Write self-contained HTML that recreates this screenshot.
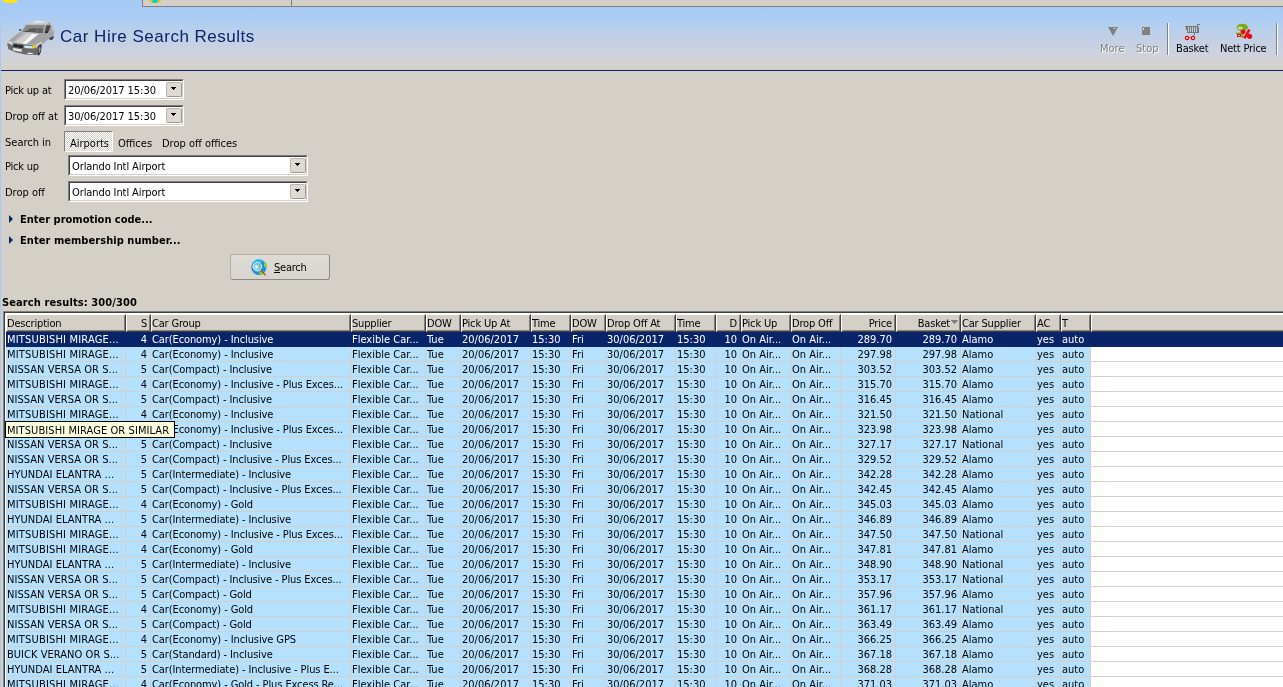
<!DOCTYPE html>
<html lang="en"><head><meta charset="utf-8"><title>Car Hire Search Results</title>
<style>
html,body{margin:0;padding:0}
body{width:1283px;height:687px;overflow:hidden;position:relative;background:#D4D0C8;font-family:"DejaVu Sans Condensed","Liberation Sans",sans-serif;font-size:11px;color:#000;line-height:13px}
div,span,i{box-sizing:border-box}
.abs{position:absolute}
.t{position:absolute;white-space:pre;line-height:13px;height:13px;margin-top:1px}
.b{font-weight:bold}
.n2{letter-spacing:-0.2px}
#edge{position:absolute;left:0;top:0;width:1px;height:687px;background:#A6CAF6}
#head{position:absolute;left:0;top:0;width:1283px;height:70px;background:linear-gradient(rgb(166,202,246) 8px,rgb(173,205,243) 20px,rgb(182,207,237) 27px,rgb(195,208,229) 40px,rgb(205,210,224) 52px,rgb(210,209,217) 58px,rgb(213,210,207) 64px,rgb(212,208,200) 70px)}
#hline{position:absolute;left:1px;top:70px;width:1282px;height:1px;background:#0A246A}
#tabs{position:absolute;left:142px;top:0;width:1141px;height:7px;background:#D4D0C8;border-left:1px solid #808080;border-bottom:1px solid #808080}
#tabs i{position:absolute;left:148px;top:0;width:1px;height:6px;background:#808080}
#title{position:absolute;left:60px;top:26px;font-family:"Liberation Sans",sans-serif;font-size:17px;line-height:22px;letter-spacing:0.5px;color:#0A246A;white-space:pre}
.sunk{position:absolute;background:#fff;border:1px solid;border-color:#808080 #fff #fff #808080}
.sunk:before{content:"";position:absolute;left:0;top:0;right:0;bottom:0;border:1px solid;border-color:#404040 #D4D0C8 #D4D0C8 #404040}
.dd{position:absolute;width:16px;height:15px;background:#DDD9D3;border:1px solid;border-color:#BCB8B0 #9C988F #9C988F #BCB8B0;border-radius:2px}
.dd:after{content:"";position:absolute;left:4px;top:4px;width:5px;height:3px;background:linear-gradient(#000,#000) 0 0/5px 1px no-repeat,linear-gradient(#000,#000) 1px 1px/3px 1px no-repeat,linear-gradient(#000,#000) 2px 2px/1px 1px no-repeat}
.tog{position:absolute;left:64px;top:131px;width:49px;height:21px;border:1px solid;border-color:#808080 #fff #fff #808080;background:repeating-conic-gradient(#fff 0% 25%,#D4D0C8 0% 50%) 0 0/2px 2px}
.tri{position:absolute;width:0;height:0;border:4px solid transparent;border-left:4px solid #0A246A;border-right:0}
#sbtn{position:absolute;left:230px;top:254px;width:100px;height:26px;border:1px solid;border-color:#B4B0A8 #8E8A82 #8E8A82 #B4B0A8;border-radius:3px;background:linear-gradient(#DEDBD5,#D8D5CE)}
.grid{position:absolute;left:3px;top:311px;width:1280px;height:376px;background:#fff;border:1px solid #808080;border-right:0;border-bottom:0}
.grid:before{content:"";position:absolute;left:0;top:0;width:1279px;height:375px;border:1px solid #404040;border-right:0;border-bottom:0}
.hdr{position:absolute;left:2px;top:1px;width:1277px;height:19px;background:#fff}
.hc{position:absolute;top:1px;height:18px;background:#D4D0C8;border:1px solid;border-color:#fff #404040 #404040 #fff;white-space:pre;overflow:hidden}
.hc:before{content:"";position:absolute;left:0;top:0;right:0;bottom:0;border:1px solid;border-color:#D4D0C8 #808080 #808080 #D4D0C8}
.hc span{position:absolute;top:2px;line-height:13px;letter-spacing:-0.18px}
.hc.al span{left:0px}
.hc.ar span{right:3px}
.sort{position:absolute;right:2px;top:5px;width:7px;height:4px;background:linear-gradient(#808080,#808080) 0 0/7px 1px no-repeat,linear-gradient(#808080,#808080) 1px 1px/5px 1px no-repeat,linear-gradient(#808080,#808080) 2px 2px/3px 1px no-repeat,linear-gradient(#808080,#808080) 3px 3px/1px 1px no-repeat}
.hc.srt span{right:10px}
.rows{position:absolute;left:2px;top:20px;width:1277px;height:355px;overflow:hidden;background:repeating-linear-gradient(#fff 0px,#fff 14px,#D4D0C8 14px,#D4D0C8 15px)}
.r{position:absolute;left:0;width:1085px;height:15px;background:#B5E1FF;border-bottom:1px solid #D4D0C8}
.r.sel{width:1277px;background:#0A246A;color:#fff;border-bottom-color:#0A246A}
.c{position:absolute;top:0;height:14px;line-height:13px;padding-top:1px;white-space:pre;overflow:hidden;border-right:1px solid #D4D0C8}
.sel .c{border-right-color:#0A246A;height:15px}
.c.al{padding-left:1px}
.c.d{letter-spacing:0.18px}
.c.d2{letter-spacing:0.04px}
.c.g{letter-spacing:-0.1px}
.c.ar{text-align:right;padding-right:3px}
.tip{position:absolute;left:1px;top:109px;width:170px;height:17px;background:#FFFFE1;border:1px solid #000;padding:2px 0 0 1px;letter-spacing:0.08px;line-height:13px;white-space:pre}
.dis{color:#808080;text-shadow:1px 1px 0 #fff}
.sep{position:absolute;top:23px;width:2px;height:32px;border-left:1px solid #808080;border-right:1px solid #fff}
#hicons{position:absolute;left:0;top:0}
#sicon{position:absolute;left:250px;top:259px}
body{will-change:transform}

</style></head>
<body>
<div id="head"></div>
<div id="edge"></div>
<div id="hline"></div>
<div id="tabs"><i></i></div>
<svg id="hicons" width="1283" height="70" viewBox="0 0 1283 70"><g><polygon points="49.2,35.2 52.1,31.4 53.7,37.2 52.1,40.0 49.2,39.4" fill="#3A3A3A"/><polygon points="42.5,33.3 45.7,25.0 48.9,22.1 52.7,25.6 54.6,30.7 53.0,36.5 48.9,38.4 42.5,44.2 39.9,46.1 34.8,48.4 34.1,44.2" fill="#A2A2A2"/><polygon points="48.9,22.1 51.4,23.1 53.7,26.9 54.6,30.7 52.7,32.0 51.1,25.6" fill="#C4C4C4"/><polygon points="26.4,24.7 30.3,22.4 34.1,21.3 42.5,21.1 48.9,22.1 45.7,25.0" fill="#CFCFCF"/><polygon points="34.1,21.3 42.5,21.1 43.1,22.3 34.8,22.4" fill="#EEEEEE"/><polygon points="26.4,24.7 45.0,24.8 42.8,33.6 21.3,31.5" fill="#8A8A8A"/><polygon points="28.4,28.8 36.1,27.9 36.1,32.8 28.0,32.0" fill="#5A5A5A"/><polygon points="36.7,28.1 43.2,28.7 42.5,33.4 36.7,32.8" fill="#626262"/><polygon points="21.3,31.5 28.4,30.4 28.0,32.0" fill="#4A4A4A"/><polygon points="46.3,25.6 50.7,25.6 48.9,31.1 44.7,33.0" fill="#484848"/><polygon points="45.0,31.4 48.2,31.1 47.9,33.0 45.0,33.3" fill="#2E2E2E"/><polygon points="18.9,29.1 20.8,29.3 21.3,31.3 19.7,30.7" fill="#3C3C3C"/><polygon points="21.3,31.5 42.8,33.6 34.1,44.5 23.2,44.5 13.6,42.6 7.8,41.3 11.1,38.4" fill="#B4B4B4"/><polygon points="27.1,33.1 34.1,33.9 23.2,44.1 14.3,42.3" fill="#D0D0D0"/><polygon points="32.2,33.8 38.6,34.3 26.4,44.3 22.6,43.9" fill="#F6F6F6"/><polygon points="38.6,34.3 42.8,33.8 34.1,44.5 26.4,44.3" fill="#A0A0A0"/><polygon points="19.4,32.3 22.6,32.7 13.6,41.6 9.1,40.7" fill="#A4A4A4"/><polygon points="7.2,44.2 8.5,41.3 13.6,42.9 34.8,45.5 36.1,48.1 38.6,46.1 39.9,46.8 37.3,55.1 25.2,54.5 15.5,52.2 8.5,49.3" fill="#6A6A6A"/><polygon points="38.0,46.1 40.9,43.6 41.8,46.1 40.9,51.9 38.9,55.7 37.7,54.5" fill="#303030"/><polygon points="38.6,48.1 40.2,46.1 40.7,49.3 39.6,52.9 38.6,52.5" fill="#9A9A9A"/><polygon points="34.8,45.5 38.0,42.9 41.5,41.6 42.5,44.2 39.9,44.2 37.3,46.8 36.1,48.4" fill="#CACACA"/><polygon points="8.0,41.3 9.8,41.1 13.0,43.2 12.7,45.2 8.5,43.6" fill="#BFE2F5"/><polygon points="8.0,41.1 9.4,41.1 9.4,42.6 8.0,42.9" fill="#E8D44A"/><polygon points="24.2,45.6 32.2,46.0 32.2,48.4 24.5,47.9" fill="#C6E8FA"/><polygon points="32.2,45.5 35.3,45.6 35.1,48.2 32.2,48.4" fill="#F2D500"/><polygon points="13.6,44.2 17.8,44.8 17.8,47.4 13.6,46.6" fill="#1E1E1E"/><polygon points="18.4,45.0 22.9,45.5 22.9,47.9 18.4,47.4" fill="#1E1E1E"/><polygon points="13.0,48.1 21.9,49.3 21.6,51.9 13.0,50.3" fill="#E6E6E6"/><polygon points="27.7,52.5 32.8,52.9 32.8,54.1 27.7,53.9" fill="#EEEEEE"/></g>
<polygon points="1108,27 1118,27 1113,36" fill="#808080"/><rect x="1114" y="28" width="1" height="1" fill="#fff"/>
<rect x="1142" y="27" width="8" height="8" fill="#808080"/><rect x="1143" y="28" width="1" height="2" fill="#E8E8E0"/>
<g stroke="#7A7672" stroke-width="1" fill="none" shape-rendering="crispEdges"><path d="M1185,26.5H1198M1186.5,27V30M1187.5,27V33M1189.5,27V32M1191.5,27V32M1193.5,27V32M1195.5,27V32M1197.5,24V32M1198.5,27V33M1187,32.5H1199M1197,24.5H1200M1194.5,33V35M1193.5,35V36"/></g>
<path d="M1189,37.5H1191" stroke="#5A8A8A" stroke-width="1"/>
<circle cx="1187" cy="38" r="1.6" fill="#fff" stroke="#F00000" stroke-width="1.4"/><circle cx="1193" cy="38" r="1.6" fill="#fff" stroke="#F00000" stroke-width="1.4"/>
<ellipse cx="1242.3" cy="27.4" rx="5.6" ry="3.6" fill="#7FA81C"/><ellipse cx="1240.3" cy="28" rx="2.6" ry="1.5" fill="#C9E08C"/>
<path d="M1241,30L1243,38" stroke="#7FA81C" stroke-width="2.4"/><rect x="1236" y="32.6" width="6" height="1.4" fill="#7FA81C"/>
<rect x="1237" y="34" width="4" height="3" fill="#EE0A14"/><rect x="1238" y="35" width="2" height="1" fill="#F8C0C0"/>
<circle cx="1243.3" cy="31.8" r="2.4" fill="#EE0A14"/><circle cx="1249.6" cy="36.3" r="2.6" fill="#EE0A14"/>
<path d="M1249.4,29.6L1244.4,38.4" stroke="#EE0A14" stroke-width="2.6"/>

<rect x="3" y="0" width="14" height="2" fill="#FFEA00"/><rect x="6" y="2" width="9" height="1" fill="#FFE000"/>
<ellipse cx="155" cy="0" rx="6" ry="3" fill="#FFB400"/><rect x="152" y="0" width="6" height="2.6" fill="#00E8E0"/><rect x="154.6" y="0" width="1" height="2.6" fill="#2E9A5A"/>
</svg>
<div id="title">Car Hire Search Results</div>

<div class="t n2" style="left:5px;top:83px">Pick up at</div>
<div class="sunk" style="left:64px;top:79px;width:120px;height:21px"><span class="t" style="left:3px;top:3px;letter-spacing:-0.05px">20/06/2017 15:30</span><i class="dd" style="left:101px;top:2px"></i></div>
<div class="t" style="left:5px;top:109px">Drop off at</div>
<div class="sunk" style="left:64px;top:105px;width:120px;height:21px"><span class="t" style="left:3px;top:3px;letter-spacing:-0.05px">30/06/2017 15:30</span><i class="dd" style="left:101px;top:2px"></i></div>

<div class="t" style="left:5px;top:135px">Search in</div>
<div class="tog"></div>
<div class="t" style="left:70px;top:136px">Airports</div>
<div class="t" style="left:118px;top:136px">Offices</div>
<div class="t" style="left:162px;top:136px">Drop off offices</div>

<div class="t n2" style="left:5px;top:159px">Pick up</div>
<div class="sunk" style="left:68px;top:155px;width:240px;height:21px"><span class="t" style="left:3px;top:3px;letter-spacing:-0.1px">Orlando Intl Airport</span><i class="dd" style="left:221px;top:2px"></i></div>
<div class="t" style="left:5px;top:185px">Drop off</div>
<div class="sunk" style="left:68px;top:181px;width:240px;height:21px"><span class="t" style="left:3px;top:3px;letter-spacing:-0.1px">Orlando Intl Airport</span><i class="dd" style="left:221px;top:2px"></i></div>

<i class="tri" style="left:9px;top:215px"></i>
<div class="t b" style="left:20px;top:212px">Enter promotion code...</div>
<i class="tri" style="left:9px;top:236px"></i>
<div class="t b" style="left:20px;top:233px;letter-spacing:0.05px">Enter membership number...</div>

<div id="sbtn"></div>
<svg id="sicon" width="18" height="18" viewBox="250 259 18 18">
<defs><radialGradient id="lg" cx="0.4" cy="0.55" r="0.6"><stop offset="0" stop-color="#fff"/><stop offset="0.45" stop-color="#8FD0C0"/><stop offset="1" stop-color="#3FA8E8"/></radialGradient></defs>
<circle cx="258.9" cy="267.5" r="7.6" fill="#1C8CF0"/><path d="M252,264a7.6,7.6 0 0 1 13,-2z" fill="#22B4F0"/>
<ellipse cx="265.4" cy="264.8" rx="1.5" ry="2.6" fill="#8AE000"/><ellipse cx="261.2" cy="272.6" rx="2.2" ry="2" fill="#8AE000"/>
<circle cx="257.3" cy="266.6" r="4.3" fill="url(#lg)" stroke="#F4F4F8" stroke-width="1"/>
<path d="M260.6,270.2L265.6,275.4" stroke="#A0561E" stroke-width="1.3"/></svg>
<div class="t" style="left:274px;top:260px;letter-spacing:-0.25px"><u>S</u>earch</div>

<div class="t b" style="left:2px;top:295px;letter-spacing:0.1px">Search results: 300/300</div>

<div class="t dis" style="left:1100px;top:41px">More</div>
<div class="t dis" style="left:1136px;top:41px">Stop</div>
<div class="sep" style="left:1167px"></div>
<div class="t" style="left:1176px;top:41px;letter-spacing:-0.15px">Basket</div>
<div class="t" style="left:1220px;top:41px;letter-spacing:-0.2px">Nett Price</div>
<div class="sep" style="left:1276px"></div>
<div class="grid">
<div class="hdr"><div class="hc al" style="left:0px;width:120px"><span>Description</span></div><div class="hc ar" style="left:120px;width:25px"><span>S</span></div><div class="hc al" style="left:145px;width:200px"><span>Car Group</span></div><div class="hc al" style="left:345px;width:75px"><span>Supplier</span></div><div class="hc al" style="left:420px;width:35px"><span>DOW</span></div><div class="hc al" style="left:455px;width:70px"><span>Pick Up At</span></div><div class="hc al" style="left:525px;width:40px"><span>Time</span></div><div class="hc al" style="left:565px;width:35px"><span>DOW</span></div><div class="hc al" style="left:600px;width:70px"><span>Drop Off At</span></div><div class="hc al" style="left:670px;width:40px"><span>Time</span></div><div class="hc ar" style="left:710px;width:25px"><span>D</span></div><div class="hc al" style="left:735px;width:50px"><span>Pick Up</span></div><div class="hc al" style="left:785px;width:50px"><span>Drop Off</span></div><div class="hc ar" style="left:835px;width:55px"><span>Price</span></div><div class="hc ar srt" style="left:890px;width:65px"><span>Basket</span><i class="sort"></i></div><div class="hc al" style="left:955px;width:75px"><span>Car Supplier</span></div><div class="hc al" style="left:1030px;width:25px"><span>AC</span></div><div class="hc al" style="left:1055px;width:30px"><span>T</span></div><div class="hc al" style="left:1085px;width:400px"></div></div>
<div class="rows">
<div class="r sel" style="top:0px"><div class="c al d" style="left:0px;width:120px">MITSUBISHI MIRAGE...</div><div class="c ar" style="left:120px;width:25px">4</div><div class="c al g" style="left:145px;width:200px">Car(Economy) - Inclusive</div><div class="c al" style="left:345px;width:75px">Flexible Car...</div><div class="c al" style="left:420px;width:35px">Tue</div><div class="c al" style="left:455px;width:70px">20/06/2017</div><div class="c al" style="left:525px;width:40px">15:30</div><div class="c al" style="left:565px;width:35px">Fri</div><div class="c al" style="left:600px;width:70px">30/06/2017</div><div class="c al" style="left:670px;width:40px">15:30</div><div class="c ar" style="left:710px;width:25px">10</div><div class="c al" style="left:735px;width:50px">On Air...</div><div class="c al" style="left:785px;width:50px">On Air...</div><div class="c ar" style="left:835px;width:55px">289.70</div><div class="c ar" style="left:890px;width:65px">289.70</div><div class="c al" style="left:955px;width:75px">Alamo</div><div class="c al" style="left:1030px;width:25px">yes</div><div class="c al" style="left:1055px;width:30px">auto</div></div>
<div class="r" style="top:15px"><div class="c al d" style="left:0px;width:120px">MITSUBISHI MIRAGE...</div><div class="c ar" style="left:120px;width:25px">4</div><div class="c al g" style="left:145px;width:200px">Car(Economy) - Inclusive</div><div class="c al" style="left:345px;width:75px">Flexible Car...</div><div class="c al" style="left:420px;width:35px">Tue</div><div class="c al" style="left:455px;width:70px">20/06/2017</div><div class="c al" style="left:525px;width:40px">15:30</div><div class="c al" style="left:565px;width:35px">Fri</div><div class="c al" style="left:600px;width:70px">30/06/2017</div><div class="c al" style="left:670px;width:40px">15:30</div><div class="c ar" style="left:710px;width:25px">10</div><div class="c al" style="left:735px;width:50px">On Air...</div><div class="c al" style="left:785px;width:50px">On Air...</div><div class="c ar" style="left:835px;width:55px">297.98</div><div class="c ar" style="left:890px;width:65px">297.98</div><div class="c al" style="left:955px;width:75px">Alamo</div><div class="c al" style="left:1030px;width:25px">yes</div><div class="c al" style="left:1055px;width:30px">auto</div></div>
<div class="r" style="top:30px"><div class="c al d2" style="left:0px;width:120px">NISSAN VERSA OR S...</div><div class="c ar" style="left:120px;width:25px">5</div><div class="c al g" style="left:145px;width:200px">Car(Compact) - Inclusive</div><div class="c al" style="left:345px;width:75px">Flexible Car...</div><div class="c al" style="left:420px;width:35px">Tue</div><div class="c al" style="left:455px;width:70px">20/06/2017</div><div class="c al" style="left:525px;width:40px">15:30</div><div class="c al" style="left:565px;width:35px">Fri</div><div class="c al" style="left:600px;width:70px">30/06/2017</div><div class="c al" style="left:670px;width:40px">15:30</div><div class="c ar" style="left:710px;width:25px">10</div><div class="c al" style="left:735px;width:50px">On Air...</div><div class="c al" style="left:785px;width:50px">On Air...</div><div class="c ar" style="left:835px;width:55px">303.52</div><div class="c ar" style="left:890px;width:65px">303.52</div><div class="c al" style="left:955px;width:75px">Alamo</div><div class="c al" style="left:1030px;width:25px">yes</div><div class="c al" style="left:1055px;width:30px">auto</div></div>
<div class="r" style="top:45px"><div class="c al d" style="left:0px;width:120px">MITSUBISHI MIRAGE...</div><div class="c ar" style="left:120px;width:25px">4</div><div class="c al g" style="left:145px;width:200px">Car(Economy) - Inclusive - Plus Exces...</div><div class="c al" style="left:345px;width:75px">Flexible Car...</div><div class="c al" style="left:420px;width:35px">Tue</div><div class="c al" style="left:455px;width:70px">20/06/2017</div><div class="c al" style="left:525px;width:40px">15:30</div><div class="c al" style="left:565px;width:35px">Fri</div><div class="c al" style="left:600px;width:70px">30/06/2017</div><div class="c al" style="left:670px;width:40px">15:30</div><div class="c ar" style="left:710px;width:25px">10</div><div class="c al" style="left:735px;width:50px">On Air...</div><div class="c al" style="left:785px;width:50px">On Air...</div><div class="c ar" style="left:835px;width:55px">315.70</div><div class="c ar" style="left:890px;width:65px">315.70</div><div class="c al" style="left:955px;width:75px">Alamo</div><div class="c al" style="left:1030px;width:25px">yes</div><div class="c al" style="left:1055px;width:30px">auto</div></div>
<div class="r" style="top:60px"><div class="c al d2" style="left:0px;width:120px">NISSAN VERSA OR S...</div><div class="c ar" style="left:120px;width:25px">5</div><div class="c al g" style="left:145px;width:200px">Car(Compact) - Inclusive</div><div class="c al" style="left:345px;width:75px">Flexible Car...</div><div class="c al" style="left:420px;width:35px">Tue</div><div class="c al" style="left:455px;width:70px">20/06/2017</div><div class="c al" style="left:525px;width:40px">15:30</div><div class="c al" style="left:565px;width:35px">Fri</div><div class="c al" style="left:600px;width:70px">30/06/2017</div><div class="c al" style="left:670px;width:40px">15:30</div><div class="c ar" style="left:710px;width:25px">10</div><div class="c al" style="left:735px;width:50px">On Air...</div><div class="c al" style="left:785px;width:50px">On Air...</div><div class="c ar" style="left:835px;width:55px">316.45</div><div class="c ar" style="left:890px;width:65px">316.45</div><div class="c al" style="left:955px;width:75px">Alamo</div><div class="c al" style="left:1030px;width:25px">yes</div><div class="c al" style="left:1055px;width:30px">auto</div></div>
<div class="r" style="top:75px"><div class="c al d" style="left:0px;width:120px">MITSUBISHI MIRAGE...</div><div class="c ar" style="left:120px;width:25px">4</div><div class="c al g" style="left:145px;width:200px">Car(Economy) - Inclusive</div><div class="c al" style="left:345px;width:75px">Flexible Car...</div><div class="c al" style="left:420px;width:35px">Tue</div><div class="c al" style="left:455px;width:70px">20/06/2017</div><div class="c al" style="left:525px;width:40px">15:30</div><div class="c al" style="left:565px;width:35px">Fri</div><div class="c al" style="left:600px;width:70px">30/06/2017</div><div class="c al" style="left:670px;width:40px">15:30</div><div class="c ar" style="left:710px;width:25px">10</div><div class="c al" style="left:735px;width:50px">On Air...</div><div class="c al" style="left:785px;width:50px">On Air...</div><div class="c ar" style="left:835px;width:55px">321.50</div><div class="c ar" style="left:890px;width:65px">321.50</div><div class="c al" style="left:955px;width:75px">National</div><div class="c al" style="left:1030px;width:25px">yes</div><div class="c al" style="left:1055px;width:30px">auto</div></div>
<div class="r" style="top:90px"><div class="c al d" style="left:0px;width:120px">MITSUBISHI MIRAGE...</div><div class="c ar" style="left:120px;width:25px">4</div><div class="c al g" style="left:145px;width:200px">Car(Economy) - Inclusive - Plus Exces...</div><div class="c al" style="left:345px;width:75px">Flexible Car...</div><div class="c al" style="left:420px;width:35px">Tue</div><div class="c al" style="left:455px;width:70px">20/06/2017</div><div class="c al" style="left:525px;width:40px">15:30</div><div class="c al" style="left:565px;width:35px">Fri</div><div class="c al" style="left:600px;width:70px">30/06/2017</div><div class="c al" style="left:670px;width:40px">15:30</div><div class="c ar" style="left:710px;width:25px">10</div><div class="c al" style="left:735px;width:50px">On Air...</div><div class="c al" style="left:785px;width:50px">On Air...</div><div class="c ar" style="left:835px;width:55px">323.98</div><div class="c ar" style="left:890px;width:65px">323.98</div><div class="c al" style="left:955px;width:75px">Alamo</div><div class="c al" style="left:1030px;width:25px">yes</div><div class="c al" style="left:1055px;width:30px">auto</div></div>
<div class="r" style="top:105px"><div class="c al d2" style="left:0px;width:120px">NISSAN VERSA OR S...</div><div class="c ar" style="left:120px;width:25px">5</div><div class="c al g" style="left:145px;width:200px">Car(Compact) - Inclusive</div><div class="c al" style="left:345px;width:75px">Flexible Car...</div><div class="c al" style="left:420px;width:35px">Tue</div><div class="c al" style="left:455px;width:70px">20/06/2017</div><div class="c al" style="left:525px;width:40px">15:30</div><div class="c al" style="left:565px;width:35px">Fri</div><div class="c al" style="left:600px;width:70px">30/06/2017</div><div class="c al" style="left:670px;width:40px">15:30</div><div class="c ar" style="left:710px;width:25px">10</div><div class="c al" style="left:735px;width:50px">On Air...</div><div class="c al" style="left:785px;width:50px">On Air...</div><div class="c ar" style="left:835px;width:55px">327.17</div><div class="c ar" style="left:890px;width:65px">327.17</div><div class="c al" style="left:955px;width:75px">National</div><div class="c al" style="left:1030px;width:25px">yes</div><div class="c al" style="left:1055px;width:30px">auto</div></div>
<div class="r" style="top:120px"><div class="c al d2" style="left:0px;width:120px">NISSAN VERSA OR S...</div><div class="c ar" style="left:120px;width:25px">5</div><div class="c al g" style="left:145px;width:200px">Car(Compact) - Inclusive - Plus Exces...</div><div class="c al" style="left:345px;width:75px">Flexible Car...</div><div class="c al" style="left:420px;width:35px">Tue</div><div class="c al" style="left:455px;width:70px">20/06/2017</div><div class="c al" style="left:525px;width:40px">15:30</div><div class="c al" style="left:565px;width:35px">Fri</div><div class="c al" style="left:600px;width:70px">30/06/2017</div><div class="c al" style="left:670px;width:40px">15:30</div><div class="c ar" style="left:710px;width:25px">10</div><div class="c al" style="left:735px;width:50px">On Air...</div><div class="c al" style="left:785px;width:50px">On Air...</div><div class="c ar" style="left:835px;width:55px">329.52</div><div class="c ar" style="left:890px;width:65px">329.52</div><div class="c al" style="left:955px;width:75px">Alamo</div><div class="c al" style="left:1030px;width:25px">yes</div><div class="c al" style="left:1055px;width:30px">auto</div></div>
<div class="r" style="top:135px"><div class="c al d2" style="left:0px;width:120px">HYUNDAI ELANTRA ...</div><div class="c ar" style="left:120px;width:25px">5</div><div class="c al g" style="left:145px;width:200px">Car(Intermediate) - Inclusive</div><div class="c al" style="left:345px;width:75px">Flexible Car...</div><div class="c al" style="left:420px;width:35px">Tue</div><div class="c al" style="left:455px;width:70px">20/06/2017</div><div class="c al" style="left:525px;width:40px">15:30</div><div class="c al" style="left:565px;width:35px">Fri</div><div class="c al" style="left:600px;width:70px">30/06/2017</div><div class="c al" style="left:670px;width:40px">15:30</div><div class="c ar" style="left:710px;width:25px">10</div><div class="c al" style="left:735px;width:50px">On Air...</div><div class="c al" style="left:785px;width:50px">On Air...</div><div class="c ar" style="left:835px;width:55px">342.28</div><div class="c ar" style="left:890px;width:65px">342.28</div><div class="c al" style="left:955px;width:75px">Alamo</div><div class="c al" style="left:1030px;width:25px">yes</div><div class="c al" style="left:1055px;width:30px">auto</div></div>
<div class="r" style="top:150px"><div class="c al d2" style="left:0px;width:120px">NISSAN VERSA OR S...</div><div class="c ar" style="left:120px;width:25px">5</div><div class="c al g" style="left:145px;width:200px">Car(Compact) - Inclusive - Plus Exces...</div><div class="c al" style="left:345px;width:75px">Flexible Car...</div><div class="c al" style="left:420px;width:35px">Tue</div><div class="c al" style="left:455px;width:70px">20/06/2017</div><div class="c al" style="left:525px;width:40px">15:30</div><div class="c al" style="left:565px;width:35px">Fri</div><div class="c al" style="left:600px;width:70px">30/06/2017</div><div class="c al" style="left:670px;width:40px">15:30</div><div class="c ar" style="left:710px;width:25px">10</div><div class="c al" style="left:735px;width:50px">On Air...</div><div class="c al" style="left:785px;width:50px">On Air...</div><div class="c ar" style="left:835px;width:55px">342.45</div><div class="c ar" style="left:890px;width:65px">342.45</div><div class="c al" style="left:955px;width:75px">Alamo</div><div class="c al" style="left:1030px;width:25px">yes</div><div class="c al" style="left:1055px;width:30px">auto</div></div>
<div class="r" style="top:165px"><div class="c al d" style="left:0px;width:120px">MITSUBISHI MIRAGE...</div><div class="c ar" style="left:120px;width:25px">4</div><div class="c al g" style="left:145px;width:200px">Car(Economy) - Gold</div><div class="c al" style="left:345px;width:75px">Flexible Car...</div><div class="c al" style="left:420px;width:35px">Tue</div><div class="c al" style="left:455px;width:70px">20/06/2017</div><div class="c al" style="left:525px;width:40px">15:30</div><div class="c al" style="left:565px;width:35px">Fri</div><div class="c al" style="left:600px;width:70px">30/06/2017</div><div class="c al" style="left:670px;width:40px">15:30</div><div class="c ar" style="left:710px;width:25px">10</div><div class="c al" style="left:735px;width:50px">On Air...</div><div class="c al" style="left:785px;width:50px">On Air...</div><div class="c ar" style="left:835px;width:55px">345.03</div><div class="c ar" style="left:890px;width:65px">345.03</div><div class="c al" style="left:955px;width:75px">Alamo</div><div class="c al" style="left:1030px;width:25px">yes</div><div class="c al" style="left:1055px;width:30px">auto</div></div>
<div class="r" style="top:180px"><div class="c al d2" style="left:0px;width:120px">HYUNDAI ELANTRA ...</div><div class="c ar" style="left:120px;width:25px">5</div><div class="c al g" style="left:145px;width:200px">Car(Intermediate) - Inclusive</div><div class="c al" style="left:345px;width:75px">Flexible Car...</div><div class="c al" style="left:420px;width:35px">Tue</div><div class="c al" style="left:455px;width:70px">20/06/2017</div><div class="c al" style="left:525px;width:40px">15:30</div><div class="c al" style="left:565px;width:35px">Fri</div><div class="c al" style="left:600px;width:70px">30/06/2017</div><div class="c al" style="left:670px;width:40px">15:30</div><div class="c ar" style="left:710px;width:25px">10</div><div class="c al" style="left:735px;width:50px">On Air...</div><div class="c al" style="left:785px;width:50px">On Air...</div><div class="c ar" style="left:835px;width:55px">346.89</div><div class="c ar" style="left:890px;width:65px">346.89</div><div class="c al" style="left:955px;width:75px">Alamo</div><div class="c al" style="left:1030px;width:25px">yes</div><div class="c al" style="left:1055px;width:30px">auto</div></div>
<div class="r" style="top:195px"><div class="c al d" style="left:0px;width:120px">MITSUBISHI MIRAGE...</div><div class="c ar" style="left:120px;width:25px">4</div><div class="c al g" style="left:145px;width:200px">Car(Economy) - Inclusive - Plus Exces...</div><div class="c al" style="left:345px;width:75px">Flexible Car...</div><div class="c al" style="left:420px;width:35px">Tue</div><div class="c al" style="left:455px;width:70px">20/06/2017</div><div class="c al" style="left:525px;width:40px">15:30</div><div class="c al" style="left:565px;width:35px">Fri</div><div class="c al" style="left:600px;width:70px">30/06/2017</div><div class="c al" style="left:670px;width:40px">15:30</div><div class="c ar" style="left:710px;width:25px">10</div><div class="c al" style="left:735px;width:50px">On Air...</div><div class="c al" style="left:785px;width:50px">On Air...</div><div class="c ar" style="left:835px;width:55px">347.50</div><div class="c ar" style="left:890px;width:65px">347.50</div><div class="c al" style="left:955px;width:75px">National</div><div class="c al" style="left:1030px;width:25px">yes</div><div class="c al" style="left:1055px;width:30px">auto</div></div>
<div class="r" style="top:210px"><div class="c al d" style="left:0px;width:120px">MITSUBISHI MIRAGE...</div><div class="c ar" style="left:120px;width:25px">4</div><div class="c al g" style="left:145px;width:200px">Car(Economy) - Gold</div><div class="c al" style="left:345px;width:75px">Flexible Car...</div><div class="c al" style="left:420px;width:35px">Tue</div><div class="c al" style="left:455px;width:70px">20/06/2017</div><div class="c al" style="left:525px;width:40px">15:30</div><div class="c al" style="left:565px;width:35px">Fri</div><div class="c al" style="left:600px;width:70px">30/06/2017</div><div class="c al" style="left:670px;width:40px">15:30</div><div class="c ar" style="left:710px;width:25px">10</div><div class="c al" style="left:735px;width:50px">On Air...</div><div class="c al" style="left:785px;width:50px">On Air...</div><div class="c ar" style="left:835px;width:55px">347.81</div><div class="c ar" style="left:890px;width:65px">347.81</div><div class="c al" style="left:955px;width:75px">Alamo</div><div class="c al" style="left:1030px;width:25px">yes</div><div class="c al" style="left:1055px;width:30px">auto</div></div>
<div class="r" style="top:225px"><div class="c al d2" style="left:0px;width:120px">HYUNDAI ELANTRA ...</div><div class="c ar" style="left:120px;width:25px">5</div><div class="c al g" style="left:145px;width:200px">Car(Intermediate) - Inclusive</div><div class="c al" style="left:345px;width:75px">Flexible Car...</div><div class="c al" style="left:420px;width:35px">Tue</div><div class="c al" style="left:455px;width:70px">20/06/2017</div><div class="c al" style="left:525px;width:40px">15:30</div><div class="c al" style="left:565px;width:35px">Fri</div><div class="c al" style="left:600px;width:70px">30/06/2017</div><div class="c al" style="left:670px;width:40px">15:30</div><div class="c ar" style="left:710px;width:25px">10</div><div class="c al" style="left:735px;width:50px">On Air...</div><div class="c al" style="left:785px;width:50px">On Air...</div><div class="c ar" style="left:835px;width:55px">348.90</div><div class="c ar" style="left:890px;width:65px">348.90</div><div class="c al" style="left:955px;width:75px">National</div><div class="c al" style="left:1030px;width:25px">yes</div><div class="c al" style="left:1055px;width:30px">auto</div></div>
<div class="r" style="top:240px"><div class="c al d2" style="left:0px;width:120px">NISSAN VERSA OR S...</div><div class="c ar" style="left:120px;width:25px">5</div><div class="c al g" style="left:145px;width:200px">Car(Compact) - Inclusive - Plus Exces...</div><div class="c al" style="left:345px;width:75px">Flexible Car...</div><div class="c al" style="left:420px;width:35px">Tue</div><div class="c al" style="left:455px;width:70px">20/06/2017</div><div class="c al" style="left:525px;width:40px">15:30</div><div class="c al" style="left:565px;width:35px">Fri</div><div class="c al" style="left:600px;width:70px">30/06/2017</div><div class="c al" style="left:670px;width:40px">15:30</div><div class="c ar" style="left:710px;width:25px">10</div><div class="c al" style="left:735px;width:50px">On Air...</div><div class="c al" style="left:785px;width:50px">On Air...</div><div class="c ar" style="left:835px;width:55px">353.17</div><div class="c ar" style="left:890px;width:65px">353.17</div><div class="c al" style="left:955px;width:75px">National</div><div class="c al" style="left:1030px;width:25px">yes</div><div class="c al" style="left:1055px;width:30px">auto</div></div>
<div class="r" style="top:255px"><div class="c al d2" style="left:0px;width:120px">NISSAN VERSA OR S...</div><div class="c ar" style="left:120px;width:25px">5</div><div class="c al g" style="left:145px;width:200px">Car(Compact) - Gold</div><div class="c al" style="left:345px;width:75px">Flexible Car...</div><div class="c al" style="left:420px;width:35px">Tue</div><div class="c al" style="left:455px;width:70px">20/06/2017</div><div class="c al" style="left:525px;width:40px">15:30</div><div class="c al" style="left:565px;width:35px">Fri</div><div class="c al" style="left:600px;width:70px">30/06/2017</div><div class="c al" style="left:670px;width:40px">15:30</div><div class="c ar" style="left:710px;width:25px">10</div><div class="c al" style="left:735px;width:50px">On Air...</div><div class="c al" style="left:785px;width:50px">On Air...</div><div class="c ar" style="left:835px;width:55px">357.96</div><div class="c ar" style="left:890px;width:65px">357.96</div><div class="c al" style="left:955px;width:75px">Alamo</div><div class="c al" style="left:1030px;width:25px">yes</div><div class="c al" style="left:1055px;width:30px">auto</div></div>
<div class="r" style="top:270px"><div class="c al d" style="left:0px;width:120px">MITSUBISHI MIRAGE...</div><div class="c ar" style="left:120px;width:25px">4</div><div class="c al g" style="left:145px;width:200px">Car(Economy) - Gold</div><div class="c al" style="left:345px;width:75px">Flexible Car...</div><div class="c al" style="left:420px;width:35px">Tue</div><div class="c al" style="left:455px;width:70px">20/06/2017</div><div class="c al" style="left:525px;width:40px">15:30</div><div class="c al" style="left:565px;width:35px">Fri</div><div class="c al" style="left:600px;width:70px">30/06/2017</div><div class="c al" style="left:670px;width:40px">15:30</div><div class="c ar" style="left:710px;width:25px">10</div><div class="c al" style="left:735px;width:50px">On Air...</div><div class="c al" style="left:785px;width:50px">On Air...</div><div class="c ar" style="left:835px;width:55px">361.17</div><div class="c ar" style="left:890px;width:65px">361.17</div><div class="c al" style="left:955px;width:75px">National</div><div class="c al" style="left:1030px;width:25px">yes</div><div class="c al" style="left:1055px;width:30px">auto</div></div>
<div class="r" style="top:285px"><div class="c al d2" style="left:0px;width:120px">NISSAN VERSA OR S...</div><div class="c ar" style="left:120px;width:25px">5</div><div class="c al g" style="left:145px;width:200px">Car(Compact) - Gold</div><div class="c al" style="left:345px;width:75px">Flexible Car...</div><div class="c al" style="left:420px;width:35px">Tue</div><div class="c al" style="left:455px;width:70px">20/06/2017</div><div class="c al" style="left:525px;width:40px">15:30</div><div class="c al" style="left:565px;width:35px">Fri</div><div class="c al" style="left:600px;width:70px">30/06/2017</div><div class="c al" style="left:670px;width:40px">15:30</div><div class="c ar" style="left:710px;width:25px">10</div><div class="c al" style="left:735px;width:50px">On Air...</div><div class="c al" style="left:785px;width:50px">On Air...</div><div class="c ar" style="left:835px;width:55px">363.49</div><div class="c ar" style="left:890px;width:65px">363.49</div><div class="c al" style="left:955px;width:75px">Alamo</div><div class="c al" style="left:1030px;width:25px">yes</div><div class="c al" style="left:1055px;width:30px">auto</div></div>
<div class="r" style="top:300px"><div class="c al d" style="left:0px;width:120px">MITSUBISHI MIRAGE...</div><div class="c ar" style="left:120px;width:25px">4</div><div class="c al g" style="left:145px;width:200px">Car(Economy) - Inclusive GPS</div><div class="c al" style="left:345px;width:75px">Flexible Car...</div><div class="c al" style="left:420px;width:35px">Tue</div><div class="c al" style="left:455px;width:70px">20/06/2017</div><div class="c al" style="left:525px;width:40px">15:30</div><div class="c al" style="left:565px;width:35px">Fri</div><div class="c al" style="left:600px;width:70px">30/06/2017</div><div class="c al" style="left:670px;width:40px">15:30</div><div class="c ar" style="left:710px;width:25px">10</div><div class="c al" style="left:735px;width:50px">On Air...</div><div class="c al" style="left:785px;width:50px">On Air...</div><div class="c ar" style="left:835px;width:55px">366.25</div><div class="c ar" style="left:890px;width:65px">366.25</div><div class="c al" style="left:955px;width:75px">Alamo</div><div class="c al" style="left:1030px;width:25px">yes</div><div class="c al" style="left:1055px;width:30px">auto</div></div>
<div class="r" style="top:315px"><div class="c al d2" style="left:0px;width:120px">BUICK VERANO OR S...</div><div class="c ar" style="left:120px;width:25px">5</div><div class="c al g" style="left:145px;width:200px">Car(Standard) - Inclusive</div><div class="c al" style="left:345px;width:75px">Flexible Car...</div><div class="c al" style="left:420px;width:35px">Tue</div><div class="c al" style="left:455px;width:70px">20/06/2017</div><div class="c al" style="left:525px;width:40px">15:30</div><div class="c al" style="left:565px;width:35px">Fri</div><div class="c al" style="left:600px;width:70px">30/06/2017</div><div class="c al" style="left:670px;width:40px">15:30</div><div class="c ar" style="left:710px;width:25px">10</div><div class="c al" style="left:735px;width:50px">On Air...</div><div class="c al" style="left:785px;width:50px">On Air...</div><div class="c ar" style="left:835px;width:55px">367.18</div><div class="c ar" style="left:890px;width:65px">367.18</div><div class="c al" style="left:955px;width:75px">Alamo</div><div class="c al" style="left:1030px;width:25px">yes</div><div class="c al" style="left:1055px;width:30px">auto</div></div>
<div class="r" style="top:330px"><div class="c al d2" style="left:0px;width:120px">HYUNDAI ELANTRA ...</div><div class="c ar" style="left:120px;width:25px">5</div><div class="c al g" style="left:145px;width:200px">Car(Intermediate) - Inclusive - Plus E...</div><div class="c al" style="left:345px;width:75px">Flexible Car...</div><div class="c al" style="left:420px;width:35px">Tue</div><div class="c al" style="left:455px;width:70px">20/06/2017</div><div class="c al" style="left:525px;width:40px">15:30</div><div class="c al" style="left:565px;width:35px">Fri</div><div class="c al" style="left:600px;width:70px">30/06/2017</div><div class="c al" style="left:670px;width:40px">15:30</div><div class="c ar" style="left:710px;width:25px">10</div><div class="c al" style="left:735px;width:50px">On Air...</div><div class="c al" style="left:785px;width:50px">On Air...</div><div class="c ar" style="left:835px;width:55px">368.28</div><div class="c ar" style="left:890px;width:65px">368.28</div><div class="c al" style="left:955px;width:75px">Alamo</div><div class="c al" style="left:1030px;width:25px">yes</div><div class="c al" style="left:1055px;width:30px">auto</div></div>
<div class="r" style="top:345px"><div class="c al d" style="left:0px;width:120px">MITSUBISHI MIRAGE...</div><div class="c ar" style="left:120px;width:25px">4</div><div class="c al g" style="left:145px;width:200px">Car(Economy) - Gold - Plus Excess Re...</div><div class="c al" style="left:345px;width:75px">Flexible Car...</div><div class="c al" style="left:420px;width:35px">Tue</div><div class="c al" style="left:455px;width:70px">20/06/2017</div><div class="c al" style="left:525px;width:40px">15:30</div><div class="c al" style="left:565px;width:35px">Fri</div><div class="c al" style="left:600px;width:70px">30/06/2017</div><div class="c al" style="left:670px;width:40px">15:30</div><div class="c ar" style="left:710px;width:25px">10</div><div class="c al" style="left:735px;width:50px">On Air...</div><div class="c al" style="left:785px;width:50px">On Air...</div><div class="c ar" style="left:835px;width:55px">371.03</div><div class="c ar" style="left:890px;width:65px">371.03</div><div class="c al" style="left:955px;width:75px">Alamo</div><div class="c al" style="left:1030px;width:25px">yes</div><div class="c al" style="left:1055px;width:30px">auto</div></div>
</div>
<div class="tip">MITSUBISHI MIRAGE OR SIMILAR</div>
</div>
</body></html>
